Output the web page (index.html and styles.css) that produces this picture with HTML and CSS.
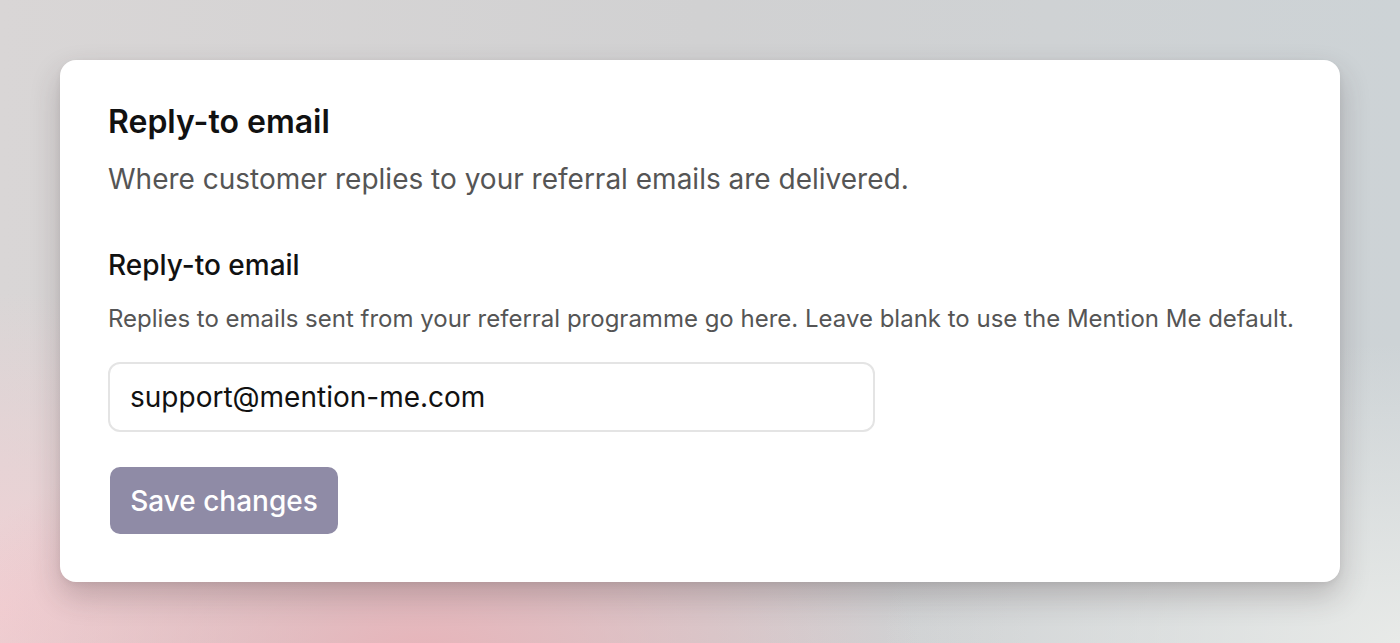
FILE: index.html
```html
<!DOCTYPE html>
<html lang="en">
<head>
<meta charset="utf-8">
<title>Reply-to email</title>
<link rel="stylesheet" href="styles.css">
</head>
<body>
<main class="page">
  <section class="card">
    <h1 class="card-title">Reply-to email</h1>
    <p class="card-subtitle">Where customer replies to your referral emails are delivered.</p>
    <div class="field">
      <label class="field-label" for="reply">Reply-to email</label>
      <p class="field-help">Replies to emails sent from your referral programme go here. Leave blank to use the Mention Me default.</p>
      <input class="field-input" id="reply" type="text" value="support@mention-me.com">
    </div>
    <button class="btn-save" type="button">Save changes</button>
  </section>
</main>
</body>
</html>
```

FILE: styles.css
```css
* { box-sizing: border-box; }
html, body { margin: 0; height: 100%; }
body {
  font-family: Inter, "Noto Sans", sans-serif;
  background:
    radial-gradient(ellipse 500px 260px at 420px 660px, rgba(232,178,184,0.95), rgba(232,178,184,0) 100%),
    radial-gradient(ellipse 320px 320px at 0px 610px, rgba(244,208,212,0.9), rgba(244,208,212,0) 100%),
    radial-gradient(ellipse 520px 300px at 1400px 643px, rgba(232,234,232,1), rgba(232,234,232,0) 100%),
    linear-gradient(90deg, #d9d6d6 0%, #d1d1d2 50%, #cdd3d6 100%);
  overflow: hidden;
}
.page {
  padding: 60px;
}
.card {
  background: #fff;
  border-radius: 16px;
  padding: 46px 48px 48px 48px;
  box-shadow: 0 14px 30px rgba(60, 40, 45, 0.24), 0 2px 6px rgba(0,0,0,0.06);
  display: flex;
  flex-direction: column;
  align-items: flex-start;
}
.card-title {
  margin: 0;
  font-size: 32px;
  line-height: 32px;
  font-weight: 600;
  color: #111;
}
.card-subtitle {
  margin: 23px 0 0;
  font-size: 28px;
  line-height: 36px;
  color: #555;
}
.field {
  margin-top: 50px;
  display: flex;
  flex-direction: column;
  width: 100%;
}
.field-label {
  font-size: 28px;
  line-height: 36px;
  font-weight: 500;
  color: #111;
}
.field-help {
  margin: 20px 0 0;
  font-size: 24px;
  line-height: 32px;
  color: #555;
  white-space: nowrap;
}
.field-input {
  margin-top: 27px;
  width: 767px;
  height: 70px;
  border: 2px solid #e4e4e4;
  border-radius: 12px;
  padding: 0 20px;
  font-family: inherit;
  font-size: 28px;
  color: #111;
  background: #fff;
  outline: none;
}
.btn-save {
  margin: 35px 0 0 2px;
  width: 228px;
  height: 67px;
  border: none;
  border-radius: 10px;
  background: #8f8ba6;
  color: #fff;
  font-family: inherit;
  font-size: 28px;
  font-weight: 500;
  padding: 0;
}
```
